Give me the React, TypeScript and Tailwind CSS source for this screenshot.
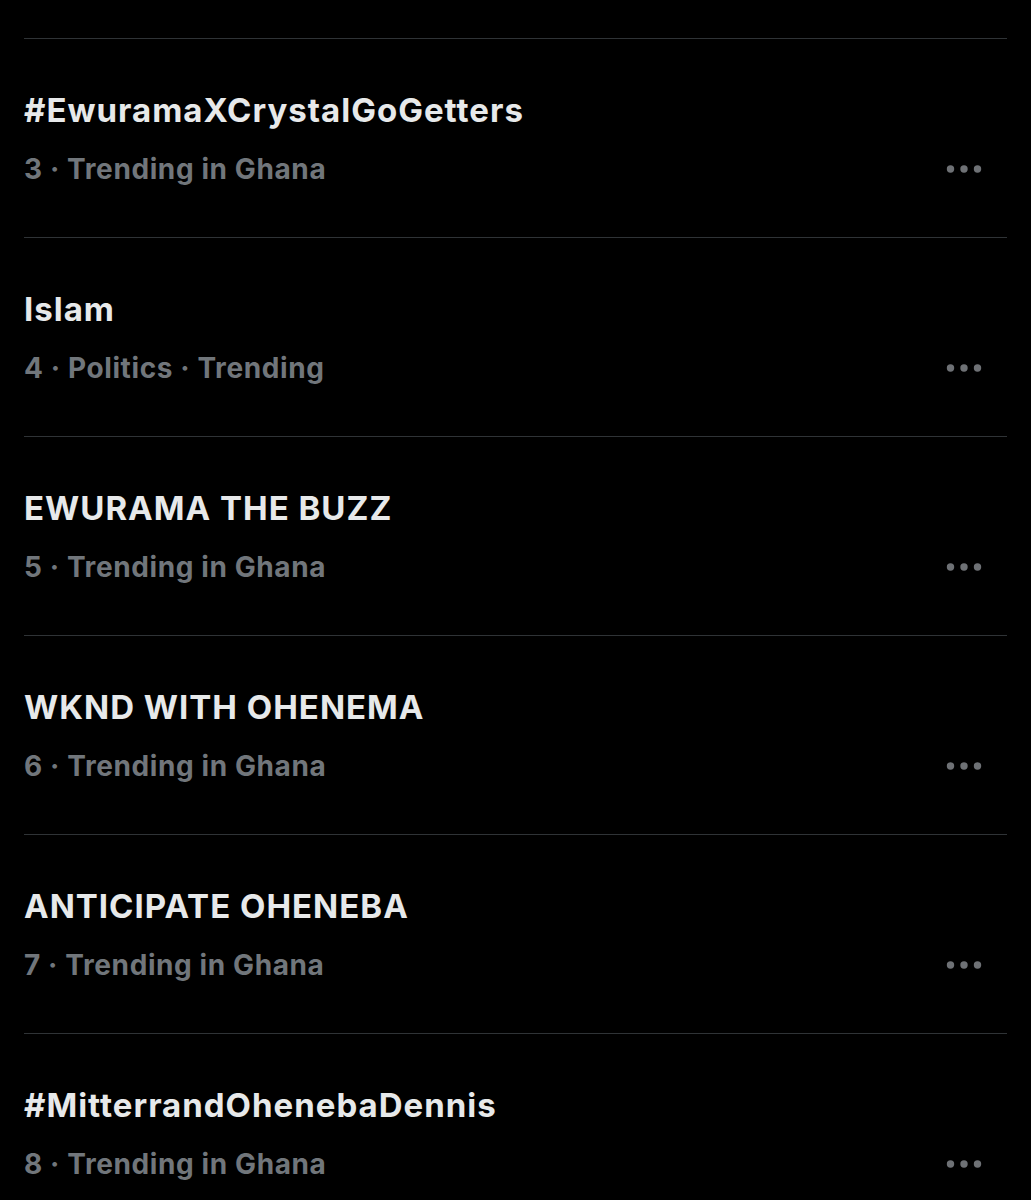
import React from "react";

type Trend = { rank: number; title: string; meta: string[] };

const trends: Trend[] = [
  { rank: 3, title: "#EwuramaXCrystalGoGetters", meta: ["Trending in Ghana"] },
  { rank: 4, title: "Islam", meta: ["Politics", "Trending"] },
  { rank: 5, title: "EWURAMA THE BUZZ", meta: ["Trending in Ghana"] },
  { rank: 6, title: "WKND WITH OHENEMA", meta: ["Trending in Ghana"] },
  { rank: 7, title: "ANTICIPATE OHENEBA", meta: ["Trending in Ghana"] },
  { rank: 8, title: "#MitterrandOhenebaDennis", meta: ["Trending in Ghana"] },
];

function MoreIcon() {
  return (
    <svg width="38" height="10" viewBox="0 0 38 10" aria-hidden="true">
      <circle cx="4.5" cy="5" r="3.7" fill="#6e7175" />
      <circle cx="18" cy="5" r="3.7" fill="#6e7175" />
      <circle cx="31.5" cy="5" r="3.7" fill="#6e7175" />
    </svg>
  );
}

function TrendRow({ trend }: { trend: Trend }) {
  return (
    <div className="border-t border-[#2f3336] pt-[53px] pb-[52px]">
      <div className="text-[33px] leading-[36px] font-bold text-[#e7e9ea] tracking-[1px]">
        {trend.title}
      </div>
      <div className="mt-[25px] flex items-center justify-between">
        <div className="text-[28px] leading-[32px] font-bold text-[#71767b] tracking-[0.6px]">
          {[String(trend.rank), ...trend.meta].join(" · ")}
        </div>
        <div className="mr-[23px] flex items-center">
          <MoreIcon />
        </div>
      </div>
    </div>
  );
}

export default function App() {
  return (
    <div
      className="h-[1200px] overflow-hidden bg-black pt-[38px]"
      style={{ fontFamily: "Inter, 'Noto Sans', sans-serif" }}
    >
      <div className="mx-6">
        {trends.map((t) => (
          <TrendRow key={t.rank} trend={t} />
        ))}
      </div>
    </div>
  );
}
